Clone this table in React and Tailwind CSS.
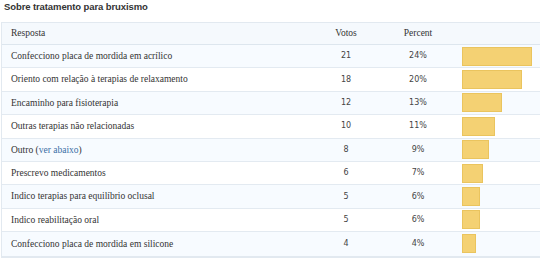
import React from "react";

const rows = [
  { label: "Confecciono placa de mordida em acrílico", votes: 21, pct: "24%", w: 70 },
  { label: "Oriento com relação à terapias de relaxamento", votes: 18, pct: "20%", w: 60 },
  { label: "Encaminho para fisioterapia", votes: 12, pct: "13%", w: 40 },
  { label: "Outras terapias não relacionadas", votes: 10, pct: "11%", w: 33 },
  { label: "Outro", link: true, votes: 8, pct: "9%", w: 27 },
  { label: "Prescrevo medicamentos", votes: 6, pct: "7%", w: 21 },
  { label: "Indico terapias para equilíbrio oclusal", votes: 5, pct: "6%", w: 18 },
  { label: "Indico reabilitação oral", votes: 5, pct: "6%", w: 18 },
  { label: "Confecciono placa de mordida em silicone", votes: 4, pct: "4%", w: 14 },
];

const serif = { fontFamily: "'Liberation Serif', 'Times New Roman', serif" };
const sans = { fontFamily: "'DejaVu Sans', Verdana, sans-serif" };

export default function App() {
  return (
    <div className="w-[540px] h-[264px] bg-white overflow-hidden">
      <div
        className="h-[22px] pl-[4px] pt-[1px] text-[9.5px] font-bold text-[#333] leading-[12px] tracking-[-0.1px]"
        style={{ fontFamily: "'Liberation Sans', Arial, sans-serif" }}
      >
        Sobre tratamento para bruxismo
      </div>
      <div className="ml-[1px] border-l border-t border-b-2 border-[#e2e9f0]">
        <div
          className="grid grid-cols-[304px_80px_64px_1fr] h-[22px] items-center bg-[#f5f9fd] border-b border-[#dde6ee] text-[9.5px] text-[#333]"
          style={serif}
        >
          <div className="pl-[9px]">Resposta</div>
          <div className="text-center">Votos</div>
          <div className="text-center">Percent</div>
          <div />
        </div>
        {rows.map((r, i) => (
          <div
            key={i}
            className={`grid grid-cols-[304px_80px_64px_1fr] h-[23.4px] items-center border-b border-[#e3eaf1] last:border-b-0 ${
              i % 2 === 0 ? "bg-[#f7fbff]" : "bg-white"
            }`}
          >
            <div
              className="pl-[9px] text-[9.5px] text-[#333] whitespace-nowrap"
              style={serif}
            >
              {r.label}
              {r.link && (
                <>
                  {" "}(<span className="text-[#3b6ea5]">ver abaixo</span>)
                </>
              )}
            </div>
            <div className="text-center text-[8px] text-[#444]" style={sans}>
              {r.votes}
            </div>
            <div className="text-center text-[8px] text-[#444]" style={sans}>
              {r.pct}
            </div>
            <div className="pl-[12px] flex items-center">
              <div
                className="h-[19px] bg-[#f4d173] border border-[#eac45e]"
                style={{ width: r.w }}
              />
            </div>
          </div>
        ))}
      </div>
    </div>
  );
}
